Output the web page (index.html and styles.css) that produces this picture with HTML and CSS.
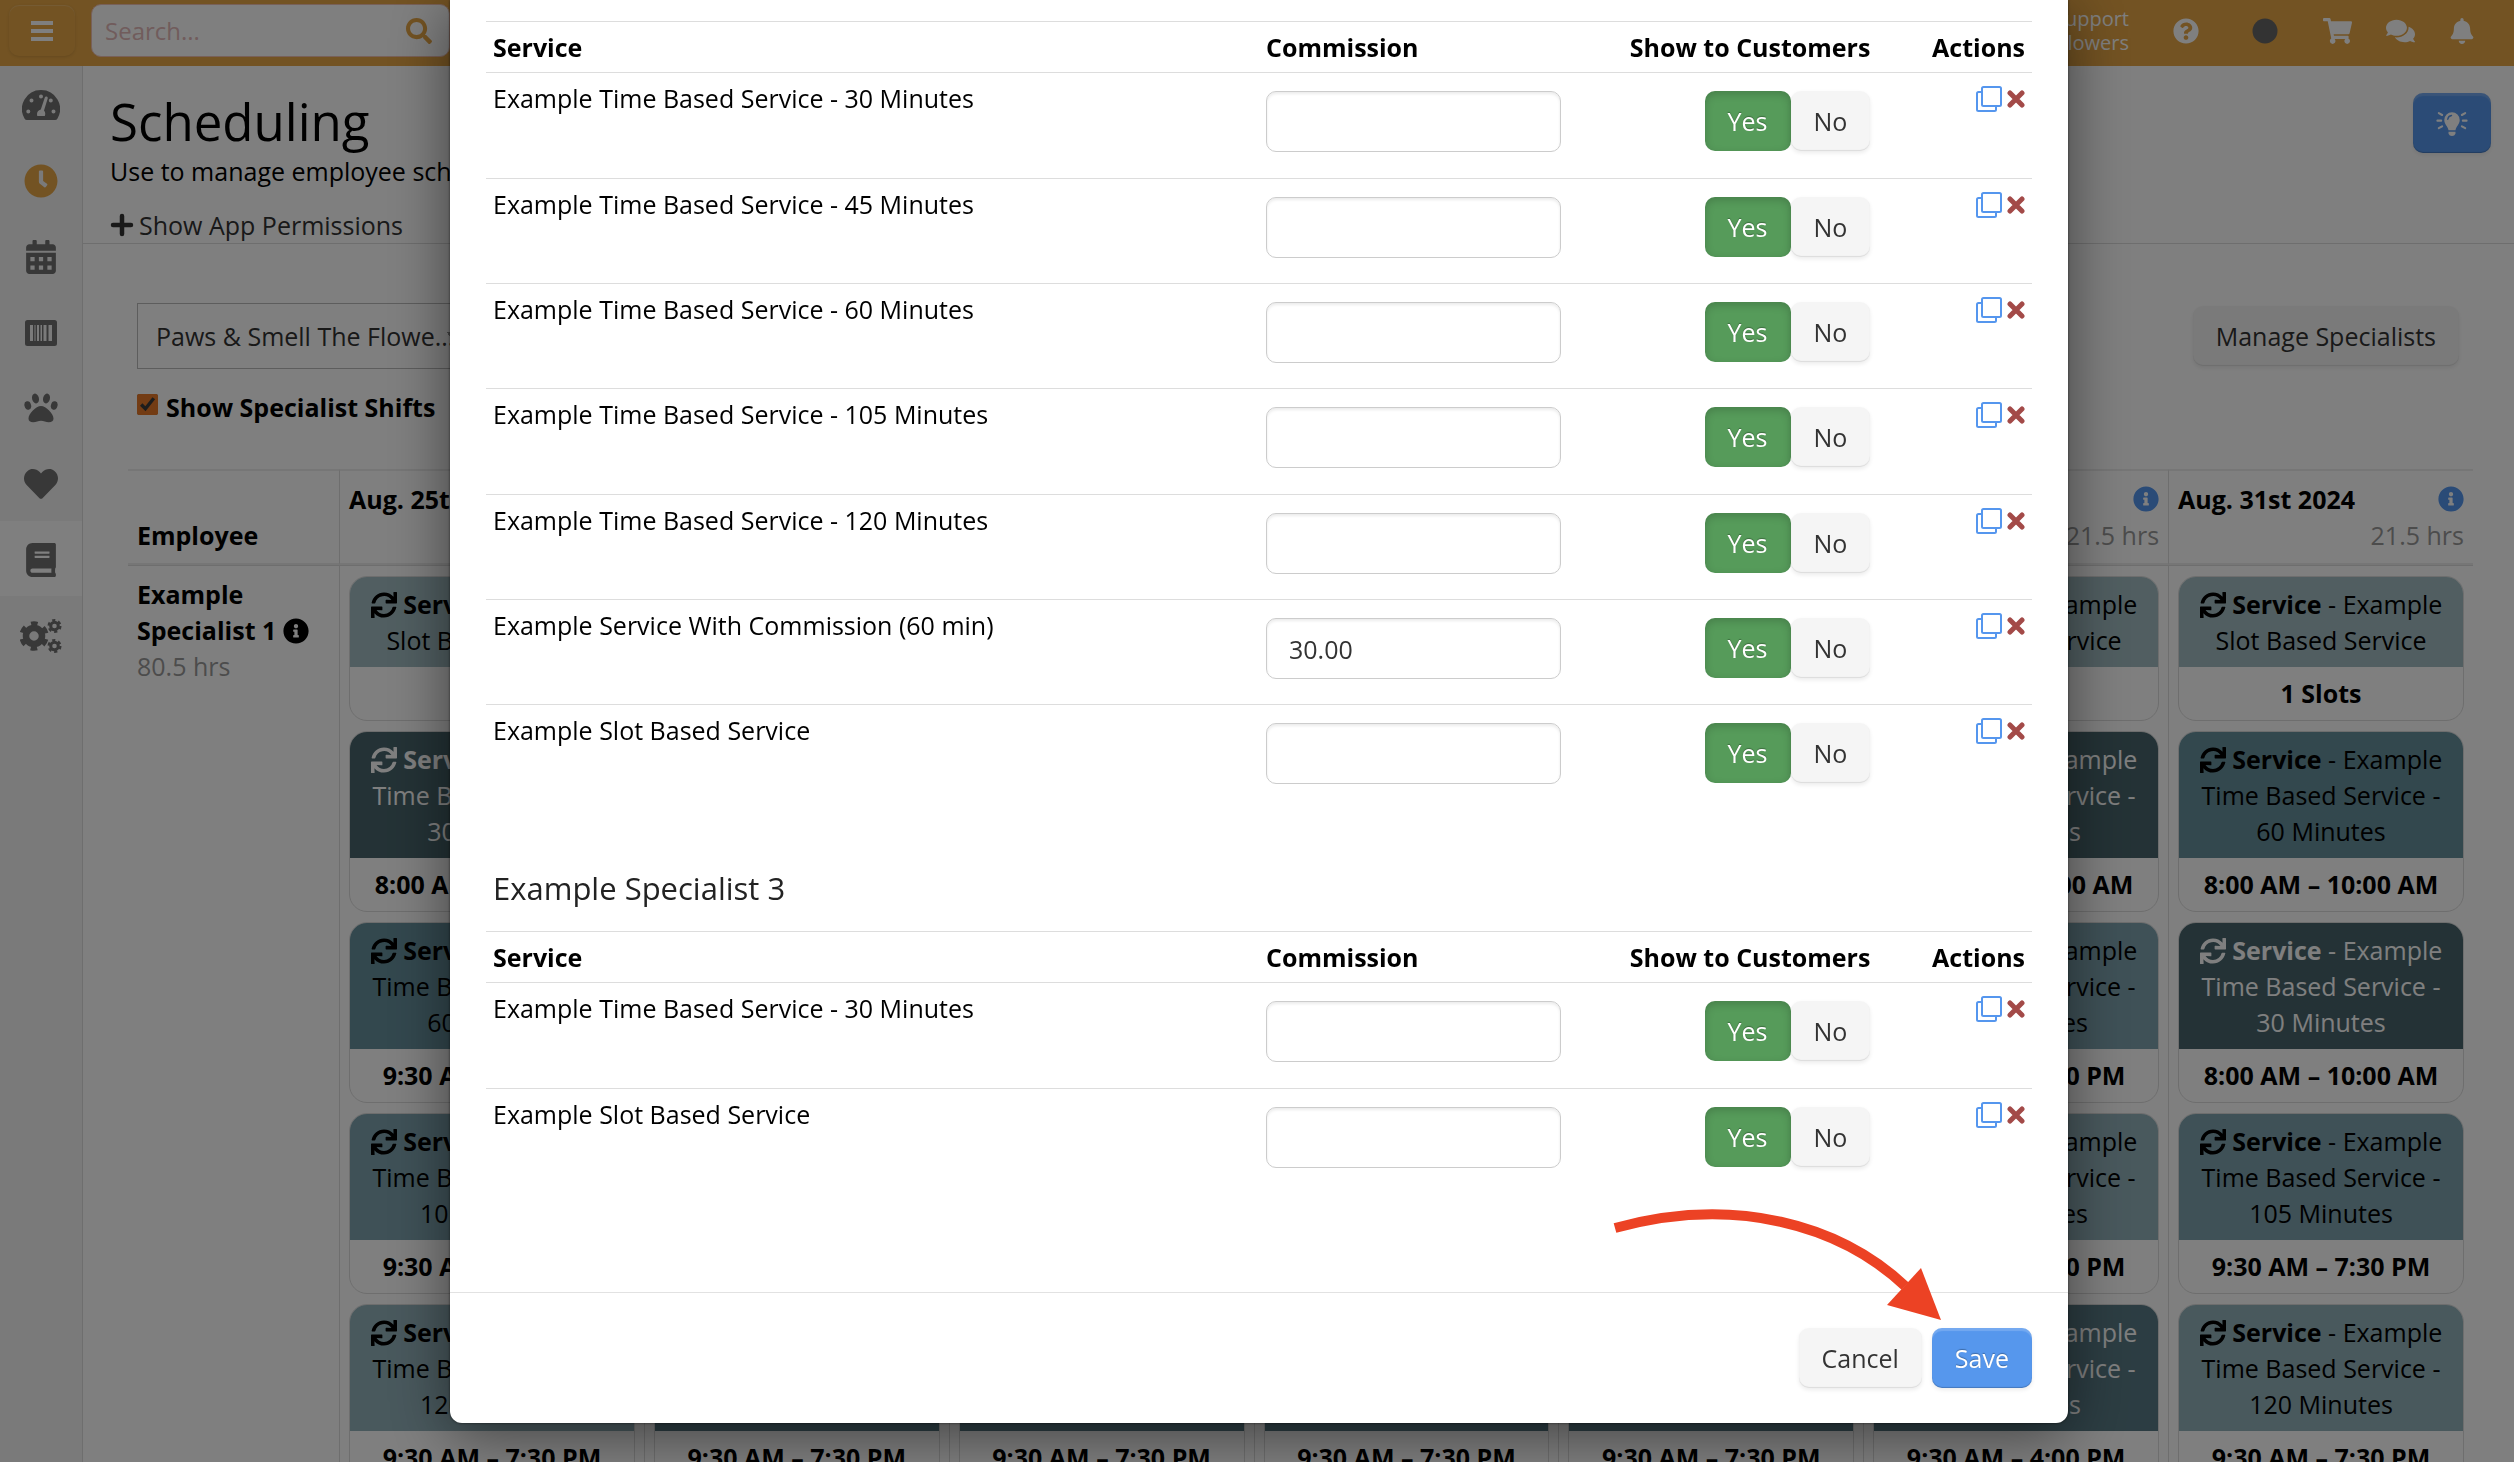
FILE: index.html
```
<!DOCTYPE html>
<html lang="en">
<head>
    <meta charset="UTF-8">
    <meta name="viewport" content="width=device-width, initial-scale=1.0">
    <link rel="stylesheet" href="styles.css">
    <title>Scheduling</title>
</head>
<body>
    <svg class="sprite" aria-hidden="true">
        <symbol id="i-bars" viewBox="0 0 24 20"><path d="M1 0h22v4H1zM1 8h22v4H1zM1 16h22v4H1z"/></symbol>
        <symbol id="i-search" viewBox="0 0 512 512"><path d="M505 442.700L405.300 343c-4.500-4.500-10.600-7-17-7H372c27.600-35.300 44-79.700 44-128C416 93.100 322.900 0 208 0S0 93.100 0 208s93.100 208 208 208c48.300 0 92.700-16.400 128-44v16.300c0 6.400 2.500 12.500 7 17l99.700 99.700c9.400 9.400 24.600 9.400 33.900 0l28.300-28.300c9.400-9.400 9.400-24.600.1-34zM208 336c-70.700 0-128-57.200-128-128 0-70.700 57.200-128 128-128 70.700 0 128 57.200 128 128 0 70.700-57.200 128-128 128z"/></symbol>
        <symbol id="i-dash" viewBox="0 0 38 30">
            <path fill-rule="evenodd" d="M19 0A19 19 0 0 0 2.500 28.500Q3.300 30 5 30H33Q34.700 30 35.500 28.500A19 19 0 0 0 19 0ZM9.500 8.500a2 2 0 1 1 0 4 2 2 0 1 1 0-4ZM19 4.500a2 2 0 1 1 0 4 2 2 0 1 1 0-4ZM28.800 8.500a2 2 0 1 1 0 4 2 2 0 1 1 0-4ZM6.300 19.500a2 2 0 1 1 0 4 2 2 0 1 1 0-4ZM31.500 19.500a2 2 0 1 1 0 4 2 2 0 1 1 0-4ZM24.600 6.600q1.500.6 1.100 2L22 20.500q2 2.500.8 5.500h-7.500q-1.300-5 3.500-6.500L22.800 7.600q.6-1.300 1.800-1Z"/></symbol>
        <symbol id="i-clock" viewBox="0 0 512 512"><path d="M256,8C119,8,8,119,8,256S119,504,256,504,504,393,504,256,393,8,256,8Zm92.490,313h0l-20,25a16,16,0,0,1-22.490,2.500h0l-67-49.720a40,40,0,0,1-15-31.230V112a16,16,0,0,1,16-16h32a16,16,0,0,1,16,16V256l58,42.500A16,16,0,0,1,348.490,321Z"/></symbol>
        <symbol id="i-calendar" viewBox="0 0 448 512"><path fill-rule="evenodd" d="M400 64h-48V16c0-8.800-7.200-16-16-16h-32c-8.800 0-16 7.200-16 16v48H160V16c0-8.800-7.200-16-16-16h-32c-8.800 0-16 7.200-16 16v48H48C21.500 64 0 85.500 0 112v48h448v-48c0-26.500-21.500-48-48-48zM0 192v272c0 26.500 21.500 48 48 48h352c26.500 0 48-21.500 48-48V192zM64 256h64v64H64zM192 256h64v64h-64zM320 256h64v64h-64zM64 384h64v64H64zM192 384h64v64h-64zM320 384h64v64h-64z"/></symbol>
        <symbol id="i-barcode" viewBox="0 0 32 26"><path fill-rule="evenodd" d="M2.500 0h27Q32 0 32 2.500v21Q32 26 29.500 26h-27Q0 26 0 23.500v-21Q0 0 2.500 0ZM5 5v16h3V5ZM9.500 5v16h1V5ZM12 5v16h2V5ZM15.500 5v16h1.500V5ZM18.500 5v16h3V5ZM23.500 5v16h3.500V5Z"/></symbol>
        <symbol id="i-paw" viewBox="0 0 34 30"><path d="M17 13c5 0 12.500 7.800 12.500 12.500 0 2.500-1.800 3.800-4.700 3.800-3 0-5-1.500-7.800-1.500s-4.800 1.500-7.800 1.500c-2.900 0-4.700-1.300-4.700-3.800C4.500 20.800 12 13 17 13z"/><ellipse cx="11.500" cy="5.500" rx="3.400" ry="5" transform="rotate(-15 11.500 5.500)"/><ellipse cx="22.500" cy="5.500" rx="3.400" ry="5" transform="rotate(15 22.500 5.500)"/><ellipse cx="3.800" cy="12.500" rx="3.300" ry="4.300" transform="rotate(-15 3.800 12.500)"/><ellipse cx="30.200" cy="12.500" rx="3.300" ry="4.300" transform="rotate(15 30.200 12.500)"/></symbol>
        <symbol id="i-heart" viewBox="0 0 512 512"><path d="M462.300 62.600C407.500 15.900 326 24.300 275.700 76.200L256 96.500l-19.700-20.300C186.100 24.300 104.500 15.900 49.700 62.600c-62.800 53.600-66.100 149.800-9.900 207.900l193.500 199.800c12.500 12.900 32.800 12.900 45.300 0l193.500-199.800c56.300-58.100 53-154.300-9.800-207.900z"/></symbol>
        <symbol id="i-book" viewBox="0 0 448 512"><path d="M448 360V24c0-13.300-10.700-24-24-24H96C43 0 0 43 0 96v320c0 53 43 96 96 96h328c13.300 0 24-10.700 24-24v-16c0-7.500-3.500-14.300-8.900-18.700-4.200-15.400-4.200-59.300 0-74.700 5.400-4.300 8.900-11.100 8.900-18.600zM128 134c0-3.300 2.700-6 6-6h212c3.300 0 6 2.700 6 6v20c0 3.300-2.700 6-6 6H134c-3.300 0-6-2.700-6-6v-20zm0 64c0-3.300 2.700-6 6-6h212c3.300 0 6 2.700 6 6v20c0 3.300-2.700 6-6 6H134c-3.300 0-6-2.700-6-6v-20zm253.400 250H96c-17.700 0-32-14.300-32-32 0-17.600 14.400-32 32-32h285.400c-1.900 17.100-1.900 46.900 0 64z"/></symbol>
        <symbol id="i-cogs" viewBox="0 0 42 34"><g fill="none" stroke="currentColor">
            <circle cx="14" cy="17" r="8" stroke-width="6.500"/><circle cx="14" cy="17" r="12.400" stroke-width="4.600" stroke-dasharray="6.500 6.480" stroke-dashoffset="-3.200"/>
            <circle cx="34.500" cy="7" r="3.800" stroke-width="3"/><circle cx="34.500" cy="7" r="5.900" stroke-width="2.200" stroke-dasharray="3.200 2.980"/>
            <circle cx="34.500" cy="27" r="3.800" stroke-width="3"/><circle cx="34.500" cy="27" r="5.900" stroke-width="2.200" stroke-dasharray="3.200 2.980"/></g></symbol>
        <symbol id="i-help" viewBox="0 0 512 512"><path d="M504 256c0 136.997-111.043 248-248 248S8 392.997 8 256C8 119.083 119.043 8 256 8s248 111.083 248 248zM262.655 90c-54.497 0-89.255 22.957-116.549 63.758-3.536 5.286-2.353 12.415 2.715 16.258l34.699 26.310c5.205 3.947 12.621 3.008 16.665-2.122 17.864-22.658 30.113-35.797 57.303-35.797 20.429 0 45.698 13.148 45.698 32.958 0 14.976-12.363 22.667-32.534 33.976C247.128 238.528 216 254.941 216 296v4c0 6.627 5.373 12 12 12h56c6.627 0 12-5.373 12-12v-1.333c0-28.462 83.186-29.647 83.186-106.667 0-58.002-60.165-102-116.531-102zM256 338c-25.365 0-46 20.635-46 46 0 25.364 20.635 46 46 46s46-20.636 46-46c0-25.365-20.635-46-46-46z"/></symbol>
        <symbol id="i-info" viewBox="0 0 512 512"><path d="M256 8C119.043 8 8 119.083 8 256c0 136.997 111.043 248 248 248s248-111.003 248-248C504 119.083 392.957 8 256 8zm0 110c23.196 0 42 18.804 42 42s-18.804 42-42 42-42-18.804-42-42 18.804-42 42-42zm56 254c0 6.627-5.373 12-12 12h-88c-6.627 0-12-5.373-12-12v-24c0-6.627 5.373-12 12-12h12v-64h-12c-6.627 0-12-5.373-12-12v-24c0-6.627 5.373-12 12-12h64c6.627 0 12 5.373 12 12v100h12c6.627 0 12 5.373 12 12v24z"/></symbol>
        <symbol id="i-circle" viewBox="0 0 26 26"><circle cx="13" cy="13" r="12.500"/></symbol>
        <symbol id="i-cart" viewBox="0 0 576 512"><path d="M528.120 301.319l47.273-208C578.806 78.301 567.391 64 551.990 64H159.208l-9.166-44.810C147.758 8.021 137.930 0 126.529 0H24C10.745 0 0 10.745 0 24v16c0 13.255 10.745 24 24 24h69.883l70.248 343.435C147.325 417.100 136 435.222 136 456c0 30.928 25.072 56 56 56s56-25.072 56-56c0-15.674-6.447-29.835-16.824-40h209.647C430.447 426.165 424 440.326 424 456c0 30.928 25.072 56 56 56s56-25.072 56-56c0-22.172-12.888-41.332-31.579-50.405l5.517-24.276c3.413-15.018-8.002-29.319-23.403-29.319H218.117l-6.545-32h293.145c11.206 0 20.920-7.754 23.403-18.681z"/></symbol>
        <symbol id="i-comments" viewBox="0 0 576 512"><path d="M416 192c0-88.400-93.100-160-208-160S0 103.600 0 192c0 34.300 14.100 65.900 38 92-13.400 30.200-35.500 54.200-35.800 54.500-2.200 2.300-2.800 5.700-1.500 8.700S4.800 352 8 352c36.600 0 66.900-12.300 88.700-25 32.200 15.700 70.300 25 111.300 25 114.900 0 208-71.600 208-160zm122 220c23.900-26 38-57.700 38-92 0-66.900-53.500-124.200-129.300-148.100.9 6.600 1.300 13.300 1.300 20.100 0 105.900-107.700 192-240 192-10.800 0-21.300-.8-31.700-1.900C207.800 439.600 281.800 480 368 480c41 0 79.100-9.200 111.300-25 21.800 12.700 52.100 25 88.700 25 3.200 0 6.100-1.900 7.300-4.800 1.300-2.900.7-6.300-1.500-8.700-.3-.3-22.400-24.200-35.800-54.500z"/></symbol>
        <symbol id="i-bell" viewBox="0 0 448 512"><path d="M224 512c35.320 0 63.970-28.650 63.970-64H160.030c0 35.350 28.650 64 63.970 64zm215.390-149.710c-19.320-20.760-55.470-51.990-55.470-154.290 0-77.700-54.480-139.900-127.940-155.160V32c0-17.670-14.320-32-31.980-32s-31.980 14.330-31.980 32v20.840C118.560 68.100 64.080 130.300 64.080 208c0 102.300-36.150 133.530-55.470 154.290-6 6.450-8.660 14.160-8.610 21.710.11 16.400 12.980 32 32.100 32h383.800c19.120 0 32-15.600 32.100-32 .05-7.550-2.610-15.270-8.610-21.710z"/></symbol>
        <symbol id="i-plus" viewBox="0 0 24 24"><path d="M12 3v18M3 12h18" stroke="currentColor" stroke-width="4.500" stroke-linecap="round"/></symbol>
        <symbol id="i-bulb" viewBox="0 0 34 28"><path d="M17 2.500a8.200 8.200 0 0 0-8.200 8.200c0 4.600 3.700 6.500 4.500 11h7.400c.8-4.500 4.500-6.400 4.500-11A8.200 8.200 0 0 0 17 2.500ZM13.300 23.300h7.400v2q-1 2.500-3.700 2.500t-3.700-2.500z"/><path d="M12.500 10q.5-3.500 4-4" fill="none" stroke="#5596ee" stroke-width="1.500" stroke-linecap="round"/><path d="M1.500 11.500h4M28.500 11.500h4M3 3.500l3.500 2M31 3.500l-3.500 2M3 19.500l3.500-2M31 19.500l-3.500-2" stroke="currentColor" stroke-width="2.200" stroke-linecap="round"/></symbol>
        <symbol id="i-sync" viewBox="0 0 512 512"><path d="M440.650 12.570l4 82.770A247.160 247.160 0 0 0 255.830 8C134.730 8 33.910 94.920 12.290 209.820A12 12 0 0 0 24.090 224h49.050a12 12 0 0 0 11.670-9.260 175.910 175.910 0 0 1 317-56.940l-101.460-4.860a12 12 0 0 0-12.570 12v47.410a12 12 0 0 0 12 12H500a12 12 0 0 0 12-12V12a12 12 0 0 0-12-12h-47.370a12 12 0 0 0-11.980 12.570zM255.830 432a175.610 175.610 0 0 1-146-77.800l101.800 4.870a12 12 0 0 0 12.570-12v-47.400a12 12 0 0 0-12-12H12a12 12 0 0 0-12 12V500a12 12 0 0 0 12 12h47.350a12 12 0 0 0 12-12.600l-4.150-82.570A247.170 247.170 0 0 0 255.830 504c121.110 0 221.930-86.920 243.550-201.820a12 12 0 0 0-11.800-14.180h-49.050a12 12 0 0 0-11.670 9.260A175.860 175.860 0 0 1 255.830 432z"/></symbol>
        <symbol id="i-copy" viewBox="0 0 26 26"><g fill="none" stroke="currentColor" stroke-width="2"><rect x="6" y="1" width="19" height="19" rx="1.500"/><path d="M6 6H2.500Q1 6 1 7.500v16Q1 25 2.500 25h16Q20 25 20 23.500V20"/></g></symbol>
        <symbol id="i-times" viewBox="0 0 18 18"><path d="M3 3l12 12M15 3L3 15" stroke="currentColor" stroke-width="5" stroke-linecap="round"/></symbol>
    </svg>

    <header class="topbar">
        <button class="btn-menu" aria-label="Menu"><svg class="icon"><use href="#i-bars"/></svg></button>
        <form class="search">
            <input type="text" placeholder="Search..." aria-label="Search">
            <button type="button" aria-label="Search"><svg class="icon"><use href="#i-search"/></svg></button>
        </form>
        <div class="account">Customer Support<br>Paws &amp; Smell The Flowers</div>
        <nav class="tools">
            <a href="#" aria-label="Help"><svg class="icon"><use href="#i-help"/></svg></a>
            <a href="#" class="status" aria-label="Status"><svg class="icon"><use href="#i-circle"/></svg></a>
            <a href="#" aria-label="Cart"><svg class="icon wide"><use href="#i-cart"/></svg></a>
            <a href="#" aria-label="Messages"><svg class="icon wide"><use href="#i-comments"/></svg></a>
            <a href="#" aria-label="Alerts"><svg class="icon"><use href="#i-bell"/></svg></a>
        </nav>
    </header>

    <div class="layout">
        <nav class="sidebar">
            <ul>
                <li><a href="#" aria-label="Dashboard"><svg class="w38"><use href="#i-dash"/></svg></a></li>
                <li><a href="#" aria-label="Time clock" class="current"><svg><use href="#i-clock"/></svg></a></li>
                <li><a href="#" aria-label="Calendar"><svg><use href="#i-calendar"/></svg></a></li>
                <li><a href="#" aria-label="Products"><svg class="w32"><use href="#i-barcode"/></svg></a></li>
                <li><a href="#" aria-label="Pets"><svg><use href="#i-paw"/></svg></a></li>
                <li><a href="#" aria-label="Favorites"><svg><use href="#i-heart"/></svg></a></li>
                <li><a href="#" aria-label="Book" class="open"><svg><use href="#i-book"/></svg></a></li>
                <li><a href="#" aria-label="Settings"><svg class="w42"><use href="#i-cogs"/></svg></a></li>
            </ul>
        </nav>

        <main>
            <div class="page-head">
                <div>
                    <h1>Scheduling</h1>
                    <p>Use to manage employee schedules</p>
                    <a href="#" class="perms"><svg><use href="#i-plus"/></svg>Show App Permissions</a>
                </div>
                <button class="btn btn-primary btn-tip" aria-label="Tips"><svg><use href="#i-bulb"/></svg></button>
            </div>

            <div class="filters">
                <select class="location" aria-label="Location">
                    <option>Paws &amp; Smell The Flowe...</option>
                </select>
                <button class="btn btn-manage">Manage Specialists</button>
            </div>
            <div class="shifts">
                <input type="checkbox" id="shifts" checked>
                <label for="shifts">Show Specialist Shifts</label>
            </div>

            <table class="schedule">
                <thead>
                    <tr id="days"><th class="employee">Employee</th></tr>
                </thead>
                <tbody>
                    <tr id="week">
                        <td class="employee"><b>Example Specialist 1 <svg><use href="#i-info"/></svg></b><span class="hrs">80.5 hrs</span></td>
                    </tr>
                </tbody>
            </table>
        </main>
    </div>

    <div class="overlay">
        <div class="modal" role="dialog" aria-label="Services">
            <div class="modal-body">
                <table class="services">
                    <thead><tr><th>Service</th><th>Commission</th><th>Show to Customers</th><th>Actions</th></tr></thead>
                    <tbody id="specialist-2"></tbody>
                </table>
                <h2>Example Specialist 3</h2>
                <table class="services">
                    <thead><tr><th>Service</th><th>Commission</th><th>Show to Customers</th><th>Actions</th></tr></thead>
                    <tbody id="specialist-3"></tbody>
                </table>
            </div>
            <div class="modal-footer">
                <button class="btn">Cancel</button>
                <button class="btn btn-primary">Save</button>
                <svg class="pointer" viewBox="0 0 340 116" aria-hidden="true">
                    <path d="M7 19C127 -14 232 16 297 77" fill="none" stroke="#ec4224" stroke-width="10"/>
                    <path d="M313 59L333 111L279 96Z" fill="#ec4224"/>
                </svg>
            </div>
        </div>
    </div>

    <script src="script.js"></script>
</body>
</html>
```
FILE: styles.css
```
* {
    box-sizing: border-box;
}
body {
    margin: 0;
    height: 100vh;
    display: flex;
    flex-direction: column;
    overflow: hidden;
    background: #fff;
    color: #000;
    font-family: "Open Sans", "Noto Sans", sans-serif;
    font-size: 25px;
    line-height: 36px;
}
button, input, select {
    font: inherit;
    color: #333;
}
a {
    color: inherit;
    text-decoration: none;
}
svg {
    fill: currentColor;
}
.sprite {
    display: none;
}
.icon {
    display: block;
    width: 26px;
    height: 26px;
}
.icon.wide {
    width: 29px;
}

/* top bar */
.topbar {
    flex: none;
    display: flex;
    align-items: center;
    height: 66px;
    padding: 0 39px 5px 9px;
    background: #e6a646;
    color: #fff;
}
.btn-menu {
    display: flex;
    align-items: center;
    justify-content: center;
    width: 66px;
    height: 51px;
    margin-right: 16px;
    padding: 0;
    border: none;
    border-radius: 10px;
    background: none;
    color: #fff;
    box-shadow: inset 0 1px 1px rgba(255,255,255,.2), 0 1px 3px rgba(0,0,0,.12);
}
.btn-menu .icon {
    width: 24px;
    height: 20px;
}
.search {
    display: flex;
    align-items: center;
    width: 359px;
    height: 53px;
    padding: 0 17px 0 13px;
    border: 1px solid #f0c0b0;
    border-radius: 10px;
    background: #fff;
}
.search input {
    flex: 1;
    min-width: 0;
    padding: 0;
    border: none;
    outline: none;
    background: none;
    font-size: 24px;
}
.search input::placeholder {
    color: #e2b8b8;
}
.search button {
    padding: 0;
    border: none;
    border-radius: 12px;
    background: none;
    color: #e6a646;
}
.account {
    margin-left: auto;
    font-size: 20px;
    line-height: 24px;
    text-align: right;
}
.tools {
    display: flex;
    align-items: center;
    gap: 34px;
    margin-left: 44px;
}
.tools .status {
    margin: 0 11px 0 19px;
    color: #666;
}

/* sidebar */
.layout {
    flex: 1;
    display: flex;
    min-height: 0;
}
.sidebar {
    flex: none;
    width: 83px;
    border-right: 1px solid #dcdcdc;
    background: #f4f4f4;
    color: #707070;
}
.sidebar ul {
    display: flex;
    flex-direction: column;
    height: 606px;
    margin: 0;
    padding: 0;
    list-style: none;
}
.sidebar li {
    flex: 1;
}
.sidebar a {
    display: flex;
    align-items: center;
    justify-content: center;
    height: 100%;
    padding-top: 3px;
}
.sidebar a.current {
    color: #e6a646;
}
.sidebar a.open {
    background: #fff;
}
.sidebar svg {
    width: 34px;
    height: 34px;
}
.sidebar .w38 {
    width: 38px;
    height: 30px;
}
.sidebar .w32 {
    width: 32px;
    height: 26px;
}
.sidebar .w42 {
    width: 42px;
}

/* page */
main {
    flex: 1;
    min-width: 0;
    overflow: hidden;
}
.page-head {
    display: flex;
    justify-content: space-between;
    align-items: flex-start;
    height: 178px;
    padding: 27px 23px 0 27px;
    border-bottom: 1px solid #dcdcdc;
}
h1 {
    margin: 0 0 4px;
    font-size: 51px;
    line-height: 56px;
    font-weight: 400;
}
.page-head p {
    margin: 0 0 18px;
}
.perms {
    display: flex;
    align-items: center;
    gap: 5px;
    color: #333;
}
.perms svg {
    width: 24px;
    height: 24px;
}
.btn {
    height: 60px;
    padding: 0 23px;
    border: none;
    border-radius: 10px;
    background: #f5f5f5;
    color: #333;
    box-shadow: inset 0 -1px 1px rgba(0,0,0,.1), 0 2px 4px rgba(0,0,0,.08);
}
.btn-primary {
    background: #5697ed;
    color: #fff;
    text-shadow: 0 -1px 1px rgba(0,0,0,.3);
    box-shadow: inset 0 3px 1px rgba(255,255,255,.18), inset 0 -1px 1px rgba(0,0,0,.2), 0 2px 4px rgba(0,0,0,.08);
}
.btn-tip svg {
    display: block;
    width: 32px;
    height: 28px;
}
.filters {
    display: flex;
    justify-content: space-between;
    align-items: center;
    padding: 59px 55px 0 54px;
}
.location {
    width: 346px;
    height: 66px;
    padding: 0 18px;
    appearance: none;
    border: 1px solid #bbb;
    border-radius: 0;
    background:
        linear-gradient(45deg, transparent 50%, #999 50%) right 27px center / 9px 9px no-repeat,
        linear-gradient(-45deg, transparent 50%, #999 50%) right 18px center / 9px 9px no-repeat,
        #fff;
    color: #333;
}
.shifts {
    display: flex;
    align-items: center;
    gap: 8px;
    height: 36px;
    margin: 20px 0 0 54px;
    font-weight: 700;
}
.shifts input {
    width: 21px;
    height: 21px;
    margin: 0 0 6px;
    accent-color: #e67828;
}

/* schedule grid */
.schedule {
    width: calc(100% - 86px);
    margin: 44px 41px 0 45px;
    border-spacing: 0;
    table-layout: fixed;
}
.schedule th, .schedule td {
    border-left: 1px solid #dcdcdc;
    text-align: left;
}
.schedule th {
    height: 92px;
    padding: 10px 9px;
    border-top: 2px solid #ececec;
    border-bottom: 2px solid #ececec;
    vertical-align: bottom;
}
.schedule td {
    padding: 10px 9px;
    border-top: 1px solid #dcdcdc;
    vertical-align: top;
}
.schedule .employee {
    width: 211px;
    border-left: none;
}
.schedule tbody .employee b {
    display: block;
}
.employee svg {
    width: 26px;
    height: 26px;
    vertical-align: -4px;
}
.day {
    display: flex;
    justify-content: space-between;
    align-items: center;
}
.day svg {
    width: 26px;
    height: 26px;
    color: #5596ee;
}
.hrs {
    display: block;
    color: #999;
    font-weight: 400;
}
.schedule th .hrs {
    text-align: right;
}
.shift {
    margin-bottom: 10px;
    overflow: hidden;
    border: 1px solid #dcdcdc;
    border-radius: 18px;
    text-align: center;
}
.shift-head {
    padding: 9px 16px;
}
.shift-head svg {
    width: 26px;
    height: 26px;
    vertical-align: -4px;
}
.shift-time {
    padding: 8px 0 9px;
    font-weight: 700;
}
.slot {
    background: #a2bdc3;
}
.m30 {
    background: #48656c;
    color: #fff;
}
.m45 {
    background: #597b86;
    color: #fff;
}
.m60 {
    background: #66909d;
}
.m105 {
    background: #7ea3af;
}
.m120 {
    background: #93b2bb;
}

/* modal */
.overlay {
    position: fixed;
    inset: 0;
    display: flex;
    justify-content: center;
    align-items: flex-start;
    padding-left: 4px;
    background: rgba(0,0,0,.5);
}
.modal {
    width: 1618px;
    max-width: 100%;
    border-radius: 0 0 12px 12px;
    background: #fff;
    box-shadow: 0 10px 60px rgba(0,0,0,.5), 0 0 3px rgba(0,0,0,.6);
}
.modal-body {
    padding: 21px 36px 99px;
}
.services {
    width: 100%;
    table-layout: fixed;
    border-spacing: 0;
}
.services th, .services td {
    padding: 7px;
    border-top: 1px solid #ddd;
    text-align: left;
    vertical-align: top;
}
.services td {
    height: 105px;
}
.services tr:nth-child(3n+1) td {
    height: 106px;
}
.services th:first-child {
    width: 50%;
}
.services th:nth-child(2), .services th:nth-child(3) {
    width: 20%;
}
.services th:nth-child(n+3), .services td:nth-child(n+3) {
    text-align: right;
}
.services input[type="text"] {
    display: block;
    width: 100%;
    height: 61px;
    margin-top: 11px;
    padding: 0 22px;
    border: 1px solid #ccc;
    border-radius: 10px;
    box-shadow: inset 0 2px 3px rgba(0,0,0,.08);
}
.toggle {
    display: flex;
    justify-content: flex-end;
    margin-top: 11px;
}
.btn-yes {
    background: #569b5a;
    color: #fff;
    text-shadow: 0 -1px 1px rgba(0,0,0,.3);
    box-shadow: inset 0 3px 8px rgba(0,0,0,.18);
}
.actions {
    display: flex;
    justify-content: flex-end;
    align-items: center;
    gap: 5px;
    height: 38px;
}
.actions button {
    padding: 0;
    border: none;
    background: none;
    color: #5596ee;
}
.actions .remove {
    color: #a34a48;
}
.actions svg {
    display: block;
    width: 26px;
    height: 26px;
}
.actions .remove svg {
    width: 18px;
    height: 18px;
}
h2 {
    margin: 56px 0 21px;
    padding-left: 7px;
    color: #222;
    font-size: 31px;
    line-height: 44px;
    font-weight: 400;
}
.modal-footer {
    position: relative;
    display: flex;
    justify-content: flex-end;
    gap: 10px;
    padding: 35px 36px;
    border-top: 1px solid #e2e2e2;
}
.pointer {
    position: absolute;
    right: 120px;
    top: -84px;
    width: 340px;
    height: 116px;
}
```
FILE: script.js
```
const icon = name => `<svg><use href="#i-${name}"/></svg>`

const names = {
    slot: 'Slot Based Service',
    m30: 'Time Based Service - 30 Minutes',
    m45: 'Time Based Service - 45 Minutes',
    m60: 'Time Based Service - 60 Minutes',
    m105: 'Time Based Service - 105 Minutes',
    m120: 'Time Based Service - 120 Minutes'
}
const early = '8:00 AM – 10:00 AM'
const late = '9:30 AM – 7:30 PM'
const weekday = [['slot', '1 Slots'], ['m30', early], ['m60', late], ['m105', late], ['m45', late]]

const days = [
    ['Aug. 25th 2024', [['slot', '1 Slots'], ['m30', early], ['m60', late], ['m105', late], ['m120', late]]],
    ['Aug. 26th 2024', weekday],
    ['Aug. 27th 2024', weekday],
    ['Aug. 28th 2024', weekday],
    ['Aug. 29th 2024', weekday],
    ['Aug. 30th 2024', [['slot', '1 Slots'], ['m30', early], ['m105', late], ['m120', late], ['m45', '9:30 AM – 4:00 PM']]],
    ['Aug. 31st 2024', [['slot', '1 Slots'], ['m60', early], ['m30', early], ['m105', late], ['m120', late]]]
]

days.forEach(([date, shifts]) => {
    document.querySelector('#days').insertAdjacentHTML('beforeend',
        `<th><div class="day">${date}${icon('info')}</div><span class="hrs">21.5 hrs</span></th>`)
    const cards = shifts.map(([type, time]) => `
        <div class="shift">
            <div class="shift-head ${type}">${icon('sync')} <b>Service</b> - Example ${names[type]}</div>
            <div class="shift-time">${time}</div>
        </div>`).join('')
    document.querySelector('#week').insertAdjacentHTML('beforeend', `<td>${cards}</td>`)
})

// services offered by each specialist: [name, commission]
const services = {
    'specialist-2': [
        ['Example Time Based Service - 30 Minutes', ''],
        ['Example Time Based Service - 45 Minutes', ''],
        ['Example Time Based Service - 60 Minutes', ''],
        ['Example Time Based Service - 105 Minutes', ''],
        ['Example Time Based Service - 120 Minutes', ''],
        ['Example Service With Commission (60 min)', '30.00'],
        ['Example Slot Based Service', '']
    ],
    'specialist-3': [
        ['Example Time Based Service - 30 Minutes', ''],
        ['Example Slot Based Service', '']
    ]
}

Object.keys(services).forEach(id => {
    document.getElementById(id).innerHTML = services[id].map(([name, commission]) => `
        <tr>
            <td>${name}</td>
            <td><input type="text" value="${commission}" aria-label="Commission for ${name}"></td>
            <td><div class="toggle"><button class="btn btn-yes">Yes</button><button class="btn">No</button></div></td>
            <td><div class="actions">
                <button aria-label="Copy">${icon('copy')}</button>
                <button class="remove" aria-label="Remove">${icon('times')}</button>
            </div></td>
        </tr>`).join('')
})
```
